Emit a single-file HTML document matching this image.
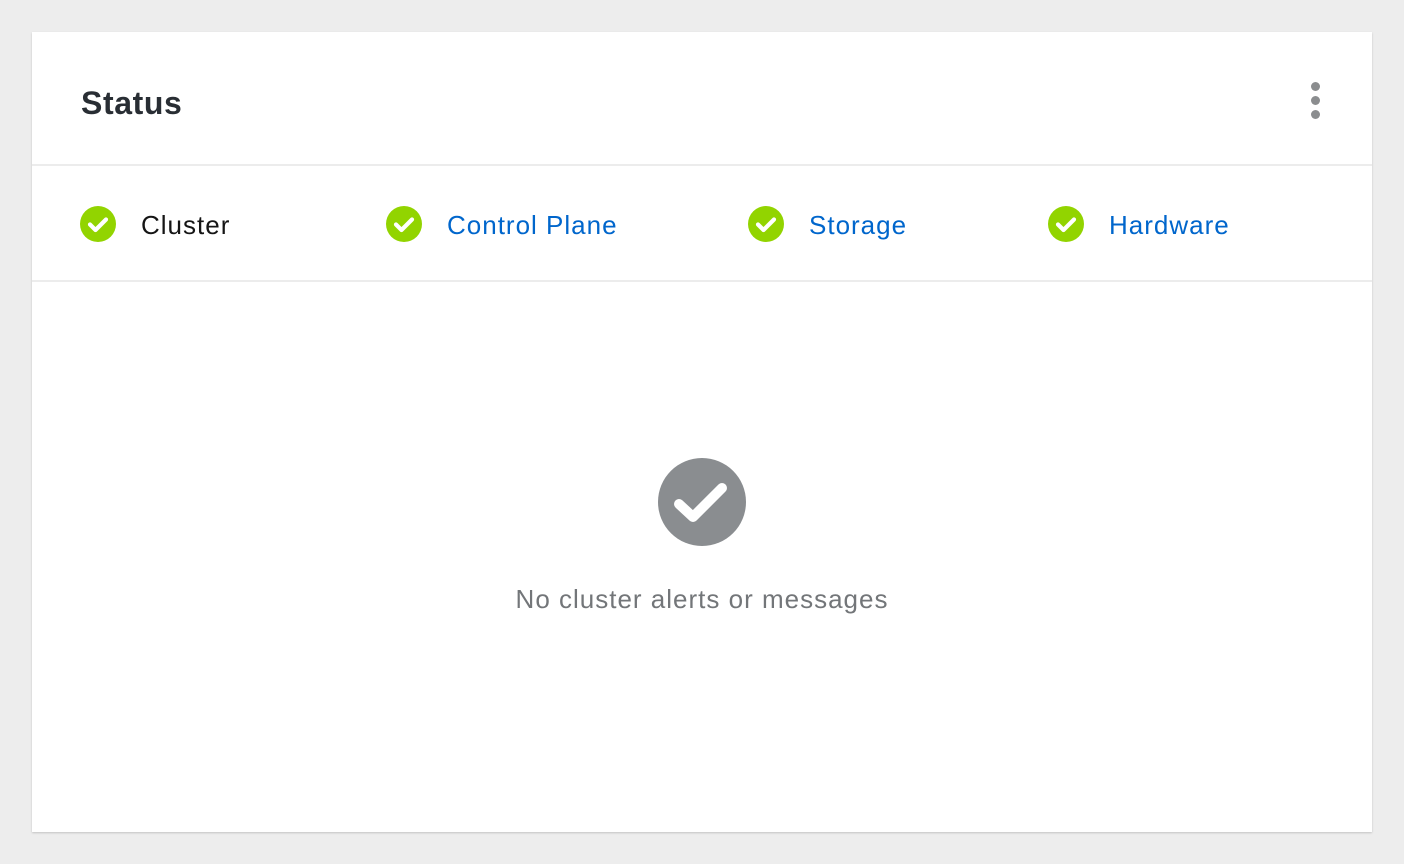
<!DOCTYPE html>
<html><head><style>
body{margin:0;background:#ededed;width:1404px;height:864px;font-family:"Liberation Sans",sans-serif;position:relative;overflow:hidden}
.card{position:absolute;left:32px;top:32px;width:1340px;height:800px;background:#fff;box-shadow:0 1px 2px rgba(0,0,0,.18)}
.t{position:absolute;white-space:nowrap}
.h{left:49px;top:53px;font-size:32px;font-weight:bold;color:#292e34;letter-spacing:0.6px}
.line{position:absolute;left:0;width:1340px;height:2px;background:#ececec}
.it{top:178px;font-size:26px;letter-spacing:1px;color:#0066cc}
.ic{position:absolute;top:174px;width:36px;height:36px}
.dot{position:absolute;left:1279px;width:9px;height:9px;border-radius:50%;background:#8b8d8f}
</style></head><body>
<div class="card">
<div class="t h">Status</div>
<div class="dot" style="top:50px"></div><div class="dot" style="top:64px"></div><div class="dot" style="top:78px"></div>
<div class="line" style="top:132px"></div>
<div class="line" style="top:248px"></div>
<svg class="ic" style="left:48px" viewBox="0 0 36 36"><circle cx="18" cy="18" r="18" fill="#92d400"/><path d="M10 18.5l5.5 5.5 10.5-10.5" fill="none" stroke="#fff" stroke-width="4.2" stroke-linecap="round" stroke-linejoin="round"/></svg>
<div class="t it" style="left:109px;color:#151515">Cluster</div>
<svg class="ic" style="left:354px" viewBox="0 0 36 36"><circle cx="18" cy="18" r="18" fill="#92d400"/><path d="M10 18.5l5.5 5.5 10.5-10.5" fill="none" stroke="#fff" stroke-width="4.2" stroke-linecap="round" stroke-linejoin="round"/></svg>
<div class="t it" style="left:415px">Control Plane</div>
<svg class="ic" style="left:716px" viewBox="0 0 36 36"><circle cx="18" cy="18" r="18" fill="#92d400"/><path d="M10 18.5l5.5 5.5 10.5-10.5" fill="none" stroke="#fff" stroke-width="4.2" stroke-linecap="round" stroke-linejoin="round"/></svg>
<div class="t it" style="left:777px">Storage</div>
<svg class="ic" style="left:1016px" viewBox="0 0 36 36"><circle cx="18" cy="18" r="18" fill="#92d400"/><path d="M10 18.5l5.5 5.5 10.5-10.5" fill="none" stroke="#fff" stroke-width="4.2" stroke-linecap="round" stroke-linejoin="round"/></svg>
<div class="t it" style="left:1077px">Hardware</div>
<svg style="position:absolute;left:626px;top:426px;width:88px;height:88px" viewBox="0 0 88 88"><circle cx="44" cy="44" r="44" fill="#8a8d90"/><path d="M21 46l14 13 29-29" fill="none" stroke="#fff" stroke-width="10" stroke-linecap="round" stroke-linejoin="round"/></svg>
<div class="t" style="left:0;width:1340px;text-align:center;top:552px;font-size:26px;letter-spacing:1px;color:#737679">No cluster alerts or messages</div>
</div>
</body></html>
